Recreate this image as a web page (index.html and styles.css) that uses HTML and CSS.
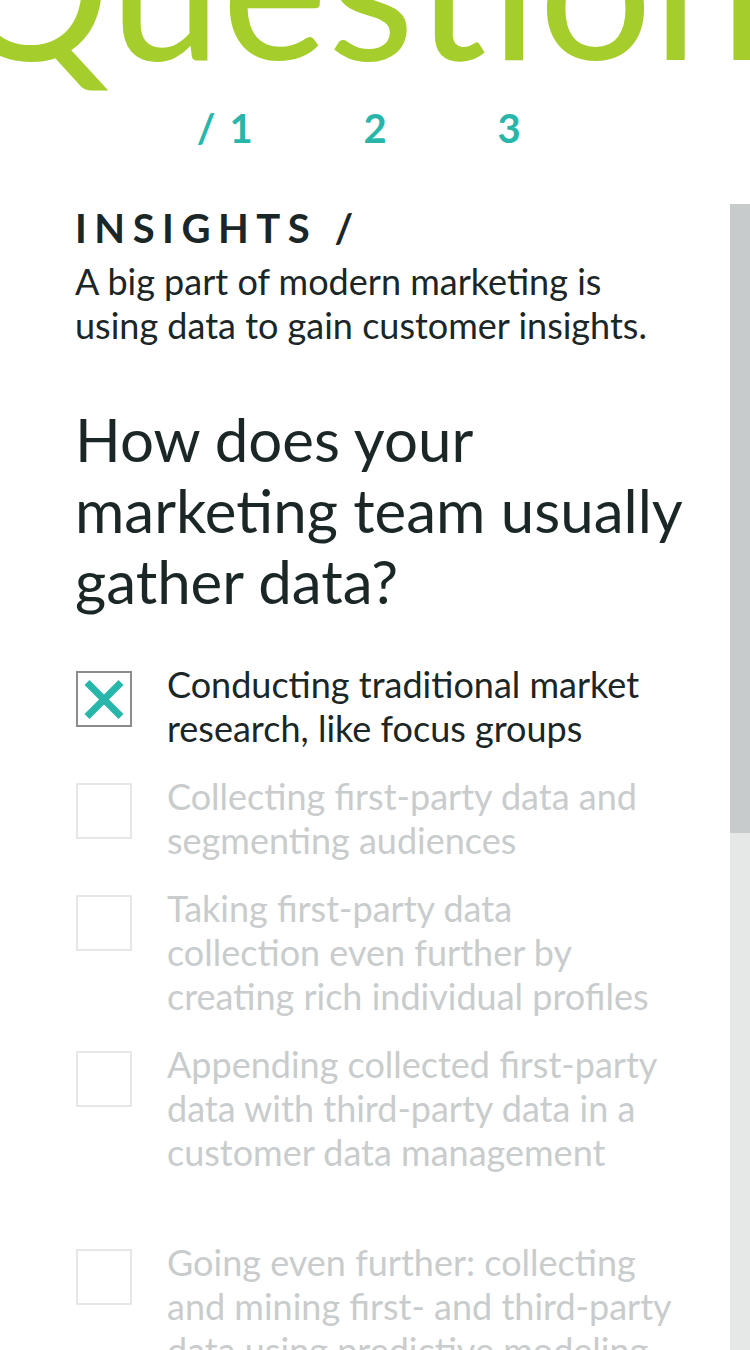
FILE: index.html
```html
<!DOCTYPE html>
<html lang="en">
<head>
<meta charset="utf-8">
<title>Question</title>
<link rel="stylesheet" href="styles.css">
</head>
<body>
<div class="page">
  <header class="hero">
    <h1 class="hero-title">Question</h1>
    <nav class="steps">
      <span class="step active"><span class="step-num">1</span></span>
      <span class="step"><span class="step-num">2</span></span>
      <span class="step"><span class="step-num">3</span></span>
    </nav>
  </header>
  <main class="quiz">
    <section class="quiz-body">
      <p class="kicker">INSIGHTS /</p>
      <p class="intro">A big part of modern marketing is using data to gain customer insights.</p>
      <h2 class="question">How does your marketing team usually gather data?</h2>
      <ul class="options">
        <li class="option checked">
          <span class="box"><svg viewBox="0 0 56 56" width="56" height="56"><path d="M11 11.5 L45 45.5 M45 11.5 L11 45.5" stroke="#27b6a9" stroke-width="7" fill="none"/></svg></span>
          <span class="label">Conducting traditional market research, like focus groups</span>
        </li>
        <li class="option">
          <span class="box"></span>
          <span class="label">Collecting first-party data and segmenting audiences</span>
        </li>
        <li class="option">
          <span class="box"></span>
          <span class="label">Taking first-party data collection even further by creating rich individual profiles</span>
        </li>
        <li class="option option-spaced">
          <span class="box"></span>
          <span class="label">Appending collected first-party data with third-party data in a customer data management</span>
        </li>
        <li class="option">
          <span class="box"></span>
          <span class="label">Going even further: collecting and mining first- and third-party data using predictive modeling</span>
        </li>
      </ul>
    </section>
    <aside class="progress">
      <div class="progress-fill" style="height:629px"></div>
    </aside>
  </main>
</div>
</body>
</html>
```
FILE: styles.css
```css
html, body {
  margin: 0;
  padding: 0;
  background: #ffffff;
}

body {
  font-family: Lato, "Open Sans", "DejaVu Sans", sans-serif;
  color: #1b2626;
  overflow-x: hidden;
}

.page {
  width: 750px;
  height: 1350px;
  overflow: hidden;
}

.hero {
  overflow-x: clip;
}

.hero-title {
  margin: -118px 0 0 -50px;
  font-size: 201px;
  line-height: 201px;
  font-weight: 400;
  color: #a5cd2b;
  white-space: nowrap;
}

.steps {
  display: flex;
  justify-content: center;
  padding-top: 21px;
  height: 48px;
}

.step {
  width: 134px;
  text-align: center;
  font-size: 40px;
  line-height: 48px;
  font-weight: 700;
  color: #27b6a9;
}

.step-num {
  position: relative;
}

.step.active .step-num::before {
  content: "/";
  position: absolute;
  right: calc(100% + 14px);
  top: 0;
}

.quiz {
  display: flex;
  margin-top: 52px;
}

.quiz-body {
  flex: 1;
  padding: 0 43px 0 75px;
}

.kicker {
  margin: 0;
  font-size: 40px;
  line-height: 48px;
  font-weight: 700;
  letter-spacing: 7.5px;
}

.intro {
  max-width: 586px;
  margin: 7px 0 0;
  font-size: 36px;
  line-height: 44px;
}

.question {
  margin: 57px 0 0;
  font-size: 60px;
  line-height: 71px;
  font-weight: 400;
}

.options {
  list-style: none;
  margin: 45px 0 0;
  padding: 0;
}

.option {
  display: flex;
  gap: 35px;
  align-items: flex-start;
  margin-bottom: 24px;
  color: #c9cccc;
}

.option-spaced {
  margin-bottom: 66px;
}

.option.checked {
  color: #1b2626;
}

.box {
  flex: none;
  width: 52px;
  height: 52px;
  margin: 9px 0 0 1px;
  border: 2px solid #e6e7e7;
  position: relative;
}

.option.checked .box {
  border-color: #8c8c8c;
}

.box svg {
  position: absolute;
  left: -2px;
  top: -2px;
}

.label {
  font-size: 36px;
  line-height: 44px;
  flex: 1;
  padding-right: 15px;
}

.progress {
  flex: none;
  width: 20px;
  align-self: stretch;
  background: #e6e7e7;
}

.progress-fill {
  background: #c8cbcb;
}
```
